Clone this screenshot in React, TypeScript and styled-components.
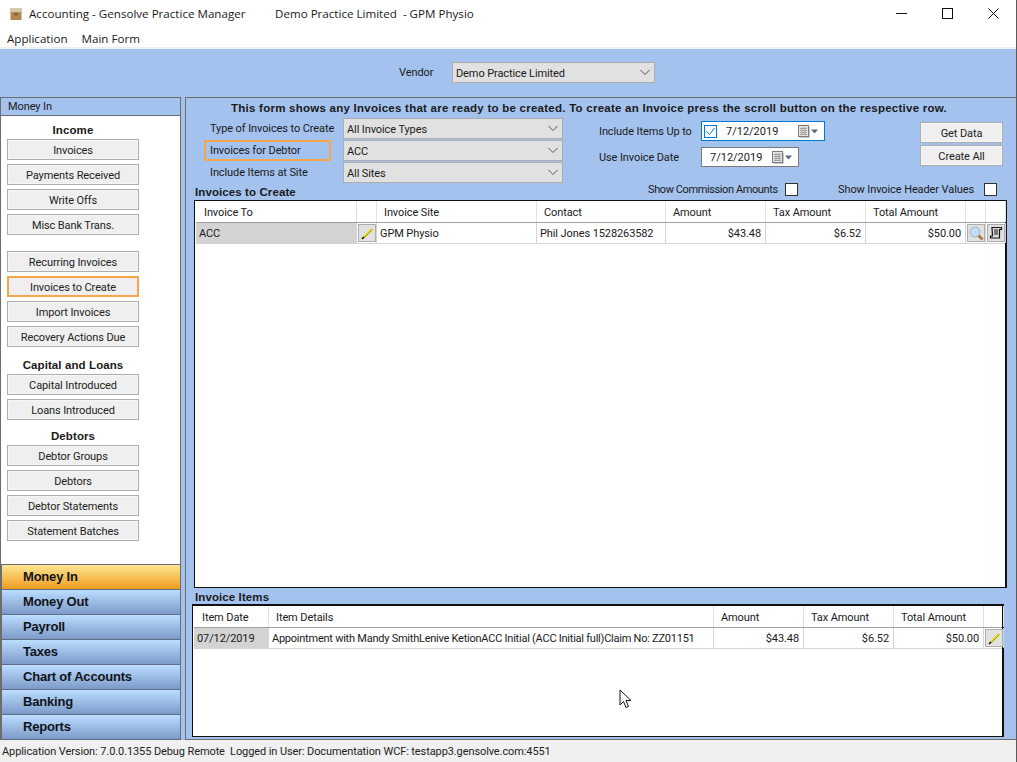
import React from 'react';
import styled, { createGlobalStyle, css } from 'styled-components';

const GlobalStyle = createGlobalStyle`
  html, body {
    margin: 0;
    padding: 0;
    background: #fff;
  }
  body {
    font-family: Roboto, 'Liberation Sans', Arial, sans-serif;
    font-size: 11px;
    letter-spacing: -0.1px;
    color: #1a1a1a;
  }
`;

const BLUE = '#a4c2ee';
const BORDER = '#6d6d6d';
const BOLD_FONT = `'Liberation Sans', Arial, sans-serif`;

const Window = styled.div`
  position: relative;
  width: 1017px;
  height: 762px;
  display: flex;
  flex-direction: column;
  overflow: hidden;
  border-right: 1px solid #5a5a5a;
  box-sizing: border-box;
`;

const TitleBar = styled.div`
  height: 27px;
  display: flex;
  align-items: center;
  padding-left: 9px;
  font-family: 'Open Sans', sans-serif;
  font-size: 11.6px;
  letter-spacing: 0;
  color: #1a1a1a;
`;

const TitleText = styled.span`
  margin-left: 6px;
  width: 246px;
`;

const TitleSpacer = styled.div`
  flex: 1;
`;

const WindowButton = styled.div`
  width: 46px;
  height: 27px;
  display: flex;
  align-items: center;
  justify-content: center;
`;

const MenuBar = styled.div`
  height: 22px;
  box-sizing: border-box;
  display: flex;
  gap: 14px;
  padding: 3px 0 0 7px;
  line-height: 17px;
  font-family: 'Open Sans', sans-serif;
  font-size: 11.6px;
  letter-spacing: 0;
  border-bottom: 2px solid #eeeeee;
`;

const VendorBand = styled.div`
  height: 48px;
  box-sizing: border-box;
  background: ${BLUE};
  display: flex;
  align-items: center;
  padding: 0 0 1px 399px;
`;

const VendorLabel = styled.span`
  width: 53px;
`;

const Main = styled.div`
  flex: 1;
  min-height: 0;
  display: flex;
  gap: 4px;
  background: ${BLUE};
`;

const Sidebar = styled.div`
  width: 181px;
  display: flex;
  flex-direction: column;
`;

const SidebarHead = styled.div`
  height: 17px;
  line-height: 17px;
  padding-left: 7px;
  border: 1px solid ${BORDER};
  background: ${BLUE};
`;

const SidebarBody = styled.div`
  height: 448px;
  background: #fff;
  border-left: 1px solid ${BORDER};
  border-right: 1px solid ${BORDER};
  box-sizing: border-box;
  padding: 8px 0 0 6px;
  display: flex;
  flex-direction: column;
  gap: 4px;
`;

const GroupHead = styled.div<{ $top?: number }>`
  width: 132px;
  text-align: center;
  font-family: ${BOLD_FONT};
  font-weight: bold;
  font-size: 11.5px;
  letter-spacing: 0.1px;
  height: 12px;
  line-height: 12px;
  margin-top: ${({ $top }) => $top ?? 0}px;
  margin-bottom: -1px;
`;

const FlatButton = styled.div<{ $active?: boolean }>`
  width: 132px;
  height: 21px;
  box-sizing: border-box;
  background: #efefef;
  border: 1px solid #adadad;
  box-shadow: inset 0 0 0 1px #f6f6f6;
  text-align: center;
  line-height: 21px;
  color: #222;
  ${({ $active }) =>
    $active &&
    css`
      border: 2px solid #f7a54a;
      line-height: 19px;
      box-shadow: none;
    `}
`;

const SideSpacer = styled.div<{ $h: number }>`
  height: ${({ $h }) => $h}px;
`;

const NavList = styled.div`
  flex: 1;
  display: flex;
  flex-direction: column;
  padding: 1px 0 0 2px;
  background: ${BORDER};
  border-right: 1px solid ${BORDER};
`;

const NavItem = styled.div<{ $active?: boolean }>`
  height: 25px;
  box-sizing: border-box;
  padding-left: 21px;
  line-height: 24px;
  font-family: ${BOLD_FONT};
  font-size: 13px;
  letter-spacing: -0.2px;
  font-weight: bold;
  color: #10131a;
  border-bottom: 1px solid #5d6d86;
  background: ${({ $active }) =>
    $active
      ? 'linear-gradient(#fde593, #f09c1e)'
      : 'linear-gradient(#bcdeff, #7c9ac8)'};
`;

const Content = styled.div`
  flex: 1;
  min-width: 0;
  border-top: 1px solid ${BORDER};
  border-left: 1px solid ${BORDER};
  border-bottom: 1px solid ${BORDER};
  display: flex;
  flex-direction: column;
  padding-left: 6px;
`;

const Notice = styled.div`
  height: 20px;
  line-height: 20px;
  text-align: center;
  font-family: ${BOLD_FONT};
  font-weight: bold;
  font-size: 11.5px;
  letter-spacing: 0.25px;
  padding-right: 30px;
`;

const FormRow = styled.div`
  display: flex;
  height: 65px;
  padding-left: 12px;
`;

const FilterGrid = styled.div`
  width: 360px;
  display: grid;
  grid-template-columns: 139px 220px;
  grid-auto-rows: 21px;
  row-gap: 1px;
  align-content: start;
`;

const FilterLabel = styled.div<{ $marked?: boolean }>`
  height: 21px;
  line-height: ${({ $marked }) => ($marked ? 17 : 21)}px;
  box-sizing: border-box;
  padding-left: 6px;
  white-space: nowrap;
  ${({ $marked }) =>
    $marked &&
    css`
      width: 127px;
      padding-left: 4px;
      border: 2px solid #f7a54a;
    `}
`;

const Combo = styled.div<{ $w?: number }>`
  position: relative;
  width: ${({ $w }) => $w ?? 220}px;
  height: 21px;
  box-sizing: border-box;
  background: #e1e1e1;
  border: 1px solid #adadad;
  line-height: 21px;
  padding-left: 3px;
`;

const ComboArrow = styled.svg`
  position: absolute;
  right: 4px;
  top: 6px;
`;

const DateColumn = styled.div`
  width: 321px;
  margin-left: 35px;
  padding-top: 3px;
  display: grid;
  grid-template-columns: 102px auto;
  grid-auto-rows: 20px;
  row-gap: 6px;
  justify-items: start;
  align-items: center;
`;

const DateLabel = styled.span`
  white-space: nowrap;
`;

const DatePicker = styled.div<{ $focus?: boolean }>`
  height: 20px;
  box-sizing: border-box;
  background: #fff;
  border: 1px solid ${({ $focus }) => ($focus ? '#0078d7' : '#7a7a7a')};
  display: flex;
  align-items: center;
  width: ${({ $focus }) => ($focus ? 124 : 98)}px;
  padding-left: ${({ $focus }) => ($focus ? 2 : 8)}px;
`;

const DateText = styled.span<{ $left?: number; $w: number }>`
  letter-spacing: 0;
  margin-left: ${({ $left }) => $left ?? 0}px;
  width: ${({ $w }) => $w}px;
`;

const ActionColumn = styled.div`
  padding-top: 4px;
  display: flex;
  flex-direction: column;
  gap: 2px;
`;

const ActionButton = styled(FlatButton)`
  width: 83px;
`;

const SectionRow = styled.div`
  display: flex;
  align-items: flex-start;
  height: 19px;
  margin-top: -2px;
  padding-left: 3px;
`;

const SectionTitle = styled.div`
  width: 100px;
  white-space: nowrap;
  font-family: ${BOLD_FONT};
  font-weight: bold;
  font-size: 11.5px;
  line-height: 14px;
  padding-top: 4px;
  letter-spacing: 0.1px;
`;

const CheckGroup = styled.label<{ $left: number; $w: number; $tight?: boolean }>`
  margin-left: ${({ $left }) => $left}px;
  width: ${({ $w }) => $w}px;
  display: flex;
  align-items: center;
  justify-content: space-between;
  white-space: nowrap;
  height: 14px;
  margin-top: 1px;
  letter-spacing: ${({ $tight }) => ($tight ? -0.4 : -0.1)}px;
`;

const CheckBox = styled.span`
  width: 13px;
  height: 13px;
  box-sizing: border-box;
  background: #fff;
  border: 1px solid #333;
`;

const TableFrame = styled.div<{ $h: number; $w: number; $shift?: number; $thick?: boolean }>`
  width: ${({ $w }) => $w}px;
  height: ${({ $h }) => $h}px;
  margin-left: ${({ $shift }) => $shift ?? 2}px;
  box-sizing: border-box;
  background: #fff;
  border: 2px solid #111;
  border-top-width: ${({ $thick }) => ($thick ? 2 : 1)}px;
  border-bottom-width: 1px;
  border-left-width: 1px;
  padding-left: 1px;
`;

const TableRow = styled.div<{ $cols: string; $head?: boolean }>`
  display: grid;
  grid-template-columns: ${({ $cols }) => $cols};
  height: ${({ $head }) => ($head ? 22 : 21)}px;
  box-sizing: border-box;
  border-bottom: 1px solid ${({ $head }) => ($head ? '#a0a0a0' : '#d4d4d4')};
`;

const HeadCell = styled.div<{ $first?: boolean }>`
  border-right: 1px solid #e2e2e2;
  line-height: 23px;
  padding-left: ${({ $first }) => ($first ? 8 : 7)}px;
  white-space: nowrap;
  overflow: hidden;
`;

const Cell = styled.div<{ $right?: boolean; $shade?: boolean; $tight?: boolean }>`
  border-right: 1px solid #d4d4d4;
  line-height: 21px;
  padding: 0 4px 0 3px;
  white-space: nowrap;
  overflow: hidden;
  text-align: ${({ $right }) => ($right ? 'right' : 'left')};
  background: ${({ $shade }) => ($shade ? '#d3d3d3' : 'transparent')};
  letter-spacing: ${({ $tight }) => ($tight ? -0.24 : -0.1)}px;
`;

const IconCell = styled.div`
  border-right: 1px solid #d4d4d4;
  padding: 1px;
  box-sizing: border-box;
`;

const IconButton = styled.div`
  width: 18px;
  height: 18px;
  box-sizing: border-box;
  background: #e1e1e1;
  border: 1px solid #adadad;
  display: flex;
  align-items: center;
  justify-content: center;
`;

const ItemsTitle = styled(SectionTitle)`
  height: 14px;
  margin: 2px 0 0 3px;
  padding-top: 0;
`;

const StatusBar = styled.div`
  height: 22px;
  line-height: 23px;
  background: #f0f0f0;
  padding-left: 2px;
  color: #222;
`;

const Cursor = styled.svg`
  position: absolute;
  left: 619px;
  top: 689px;
`;

const Chevron = () => (
  <ComboArrow width="10" height="7" viewBox="0 0 10 7">
    <path d="M0.5 1 L5 5.5 L9.5 1" fill="none" stroke="#555" strokeWidth="1" />
  </ComboArrow>
);

const Calendar = () => (
  <svg width="21" height="13" viewBox="0 0 21 13">
    <rect x="0.5" y="0.5" width="10" height="11" fill="#e4e4e4" stroke="#7c7c7c" />
    <path d="M2 3.5h7M2 5.5h7M2 7.5h7M2 9.5h7M4 2v8M7 2v8" stroke="#a2a2a2" strokeWidth="1" />
    <path d="M11.5 2v10.5h-10" fill="none" stroke="#c8c8c8" />
    <path d="M13 4.5h7l-3.5 4z" fill="#5a6a85" />
  </svg>
);

const Pencil = () => (
  <svg width="13" height="13" viewBox="0 0 13 13">
    <path d="M2 11 L11 2" stroke="#e8e000" strokeWidth="2.2" />
    <path d="M1 12 L3 10" stroke="#111" strokeWidth="1.6" />
    <path d="M3 11 L11.5 2.5" stroke="#6a6400" strokeWidth="0.6" />
  </svg>
);

const Magnifier = () => (
  <svg width="15" height="15" viewBox="0 0 15 15">
    <circle cx="6" cy="6" r="5" fill="#c5dcf5" stroke="#9ab4d0" />
    <path d="M9.5 9.5 L13.5 13.5" stroke="#b07a3a" strokeWidth="3" />
  </svg>
);

const Scroll = () => (
  <svg width="14" height="14" viewBox="0 0 14 14">
    <path
      d="M3 1.5h9.5v2h-2V12h-9v-2h2z M5 4h4 M5 6h4 M5 8h4"
      fill="none"
      stroke="#111"
      strokeWidth="1.2"
    />
  </svg>
);

const BoxLogo = () => (
  <svg width="14" height="14" viewBox="0 0 14 14">
    <rect x="1" y="1" width="12" height="4" fill="#d8c9a8" />
    <rect x="1.5" y="5" width="11" height="8" fill="#b08a50" />
    <rect x="5.5" y="6" width="3" height="2.5" fill="#7a5a2a" />
  </svg>
);

const createCols = '161px 20px 160px 129px 100px 100px 100px 20px 20px';
const itemCols = '75px 445px 90px 90px 90px 20px';

const App = () => (
  <Window>
    <GlobalStyle />
    <TitleBar>
      <BoxLogo />
      <TitleText>Accounting - Gensolve Practice Manager</TitleText>
      <span>Demo Practice Limited&nbsp; - GPM Physio</span>
      <TitleSpacer />
      <WindowButton>
        <svg width="11" height="11" viewBox="0 0 11 11">
          <path d="M0 5.5h11" stroke="#111" />
        </svg>
      </WindowButton>
      <WindowButton>
        <svg width="11" height="11" viewBox="0 0 11 11">
          <rect x="0.5" y="0.5" width="10" height="10" fill="none" stroke="#111" />
        </svg>
      </WindowButton>
      <WindowButton>
        <svg width="11" height="11" viewBox="0 0 11 11">
          <path d="M0.5 0.5l10 10M10.5 0.5l-10 10" stroke="#111" />
        </svg>
      </WindowButton>
    </TitleBar>
    <MenuBar>
      <span>Application</span>
      <span>Main Form</span>
    </MenuBar>
    <VendorBand>
      <VendorLabel>Vendor</VendorLabel>
      <Combo $w={203}>
        Demo Practice Limited
        <Chevron />
      </Combo>
    </VendorBand>
    <Main>
      <Sidebar>
        <SidebarHead>Money In</SidebarHead>
        <SidebarBody>
          <GroupHead>Income</GroupHead>
          <FlatButton>Invoices</FlatButton>
          <FlatButton>Payments Received</FlatButton>
          <FlatButton>Write Offs</FlatButton>
          <FlatButton>Misc Bank Trans.</FlatButton>
          <SideSpacer $h={8} />
          <FlatButton>Recurring Invoices</FlatButton>
          <FlatButton $active>Invoices to Create</FlatButton>
          <FlatButton>Import Invoices</FlatButton>
          <FlatButton>Recovery Actions Due</FlatButton>
          <GroupHead $top={8}>Capital and Loans</GroupHead>
          <FlatButton>Capital Introduced</FlatButton>
          <FlatButton>Loans Introduced</FlatButton>
          <GroupHead $top={6}>Debtors</GroupHead>
          <FlatButton>Debtor Groups</FlatButton>
          <FlatButton>Debtors</FlatButton>
          <FlatButton>Debtor Statements</FlatButton>
          <FlatButton>Statement Batches</FlatButton>
        </SidebarBody>
        <NavList>
          <NavItem $active>Money In</NavItem>
          <NavItem>Money Out</NavItem>
          <NavItem>Payroll</NavItem>
          <NavItem>Taxes</NavItem>
          <NavItem>Chart of Accounts</NavItem>
          <NavItem>Banking</NavItem>
          <NavItem>Reports</NavItem>
        </NavList>
      </Sidebar>
      <Content>
        <Notice>
          This form shows any Invoices that are ready to be created. To create an Invoice press the
          scroll button on the respective row.
        </Notice>
        <FormRow>
          <FilterGrid>
            <FilterLabel>Type of Invoices to Create</FilterLabel>
            <Combo>
              All Invoice Types
              <Chevron />
            </Combo>
            <FilterLabel $marked>Invoices for Debtor</FilterLabel>
            <Combo>
              ACC
              <Chevron />
            </Combo>
            <FilterLabel>Include Items at Site</FilterLabel>
            <Combo>
              All Sites
              <Chevron />
            </Combo>
          </FilterGrid>
          <DateColumn>
            <DateLabel>Include Items Up to</DateLabel>
            <DatePicker $focus>
              <svg width="13" height="13" viewBox="0 0 13 13">
                <rect x="0.5" y="0.5" width="12" height="12" fill="#fff" stroke="#0078d7" />
                <path d="M2.5 6.5l3 3 5-6.5" fill="none" stroke="#0078d7" />
              </svg>
              <DateText $left={9} $w={72}>7/12/2019</DateText>
              <Calendar />
            </DatePicker>
            <DateLabel>Use Invoice Date</DateLabel>
            <DatePicker>
              <DateText $w={62}>7/12/2019</DateText>
              <Calendar />
            </DatePicker>
          </DateColumn>
          <ActionColumn>
            <ActionButton>Get Data</ActionButton>
            <ActionButton>Create All</ActionButton>
          </ActionColumn>
        </FormRow>
        <SectionRow>
          <SectionTitle>Invoices to Create</SectionTitle>
          <CheckGroup $left={353} $w={150} $tight>
            Show Commission Amounts
            <CheckBox />
          </CheckGroup>
          <CheckGroup $left={40} $w={159}>
            Show Invoice Header Values
            <CheckBox />
          </CheckGroup>
        </SectionRow>
        <TableFrame $h={388} $w={813}>
          <TableRow $cols={createCols} $head>
            <HeadCell $first>Invoice To</HeadCell>
            <HeadCell />
            <HeadCell>Invoice Site</HeadCell>
            <HeadCell>Contact</HeadCell>
            <HeadCell>Amount</HeadCell>
            <HeadCell>Tax Amount</HeadCell>
            <HeadCell>Total Amount</HeadCell>
            <HeadCell />
            <HeadCell />
          </TableRow>
          <TableRow $cols={createCols}>
            <Cell $shade>ACC</Cell>
            <IconCell>
              <IconButton>
                <Pencil />
              </IconButton>
            </IconCell>
            <Cell>GPM Physio</Cell>
            <Cell>Phil Jones 1528263582</Cell>
            <Cell $right>$43.48</Cell>
            <Cell $right>$6.52</Cell>
            <Cell $right>$50.00</Cell>
            <IconCell>
              <IconButton>
                <Magnifier />
              </IconButton>
            </IconCell>
            <IconCell>
              <IconButton>
                <Scroll />
              </IconButton>
            </IconCell>
          </TableRow>
        </TableFrame>
        <ItemsTitle>Invoice Items</ItemsTitle>
        <TableFrame $h={133} $w={812} $shift={0} $thick>
          <TableRow $cols={itemCols} $head>
            <HeadCell $first>Item Date</HeadCell>
            <HeadCell>Item Details</HeadCell>
            <HeadCell>Amount</HeadCell>
            <HeadCell>Tax Amount</HeadCell>
            <HeadCell>Total Amount</HeadCell>
            <HeadCell />
          </TableRow>
          <TableRow $cols={itemCols}>
            <Cell $shade>07/12/2019</Cell>
            <Cell $tight>Appointment with Mandy SmithLenive KetionACC Initial (ACC Initial full)Claim No: ZZ01151</Cell>
            <Cell $right>$43.48</Cell>
            <Cell $right>$6.52</Cell>
            <Cell $right>$50.00</Cell>
            <IconCell>
              <IconButton>
                <Pencil />
              </IconButton>
            </IconCell>
          </TableRow>
        </TableFrame>
      </Content>
    </Main>
    <StatusBar>
      Application Version: 7.0.0.1355 Debug Remote&nbsp; Logged in User: Documentation WCF:
      testapp3.gensolve.com:4551
    </StatusBar>
    <Cursor width="13" height="20" viewBox="0 0 13 20">
      <path
        d="M1 1 L1 16 L4.5 12.5 L7 18.5 L9.5 17.5 L7 11.5 L12 11.5 Z"
        fill="#fff"
        stroke="#111"
        strokeWidth="1"
      />
    </Cursor>
  </Window>
);

export default App;
